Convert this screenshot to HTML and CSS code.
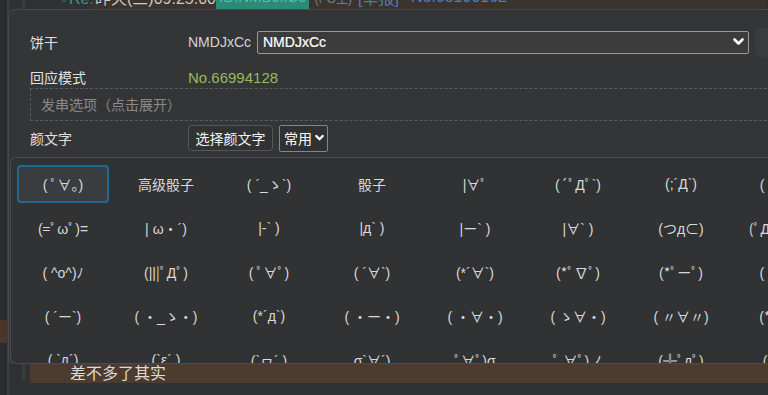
FILE: index.html
```html
<!DOCTYPE html>
<html lang="zh">
<head>
<meta charset="utf-8">
<title>颜文字</title>
<link rel="stylesheet" href="styles.css">
</head>
<body>
<div class="page">
  <div class="side"><div class="side-mark"></div></div>
  <div class="rail"></div>
  <div class="main">
    <div class="thread">
      <div class="head">
        <span class="re">『Re:</span>
        <div class="head-bar">
          <span class="time">昨天(三)09:25:00</span>
          <span class="uid">ID:NMDJxCc</span>
          <span class="po">(PO主)</span>
          <span class="report">[举报]</span>
          <span class="no">No.68190162</span>
        </div>
      </div>
      <div class="reply">差不多了其实</div>
    </div>
  </div>
</div>

<div class="modal">
  <div class="row row-cookie">
    <div class="label">饼干</div>
    <div class="value">
      <span class="cookie">NMDJxCc</span>
      <div class="select select-wide">
        <span class="select-text">NMDJxCc</span>
        <svg class="chev" width="11" height="8" viewBox="0 0 11 8"><path d="M1.5 1.5 L5.5 5.5 L9.5 1.5" fill="none" stroke="#fff" stroke-width="2.6" stroke-linecap="round" stroke-linejoin="round"/></svg>
      </div>
      <div class="side-btn"></div>
    </div>
  </div>
  <div class="row row-mode">
    <div class="label">回应模式</div>
    <div class="value"><span class="reply-no">No.66994128</span></div>
  </div>
  <div class="options">发串选项（点击展开）</div>
  <div class="row row-kao">
    <div class="label">颜文字</div>
    <div class="value">
      <button class="btn">选择颜文字</button>
      <div class="select select-small">
        <span class="select-text">常用</span>
        <svg class="chev" width="9" height="8" viewBox="0 0 9 8"><path d="M1.3 2 L4.5 5.3 L7.7 2" fill="none" stroke="#fff" stroke-width="2.3" stroke-linecap="round" stroke-linejoin="round"/></svg>
      </div>
    </div>
  </div>
  <div class="panel">
    <div class="grid">
      <div class="cell active">( ﾟ∀。)</div>
      <div class="cell cjk">高级骰子</div>
      <div class="cell">( ´_ゝ`)</div>
      <div class="cell cjk">骰子</div>
      <div class="cell">|∀ﾟ</div>
      <div class="cell">(´ﾟДﾟ`)</div>
      <div class="cell">(;´Д`)</div>
      <div class="cell">(｀･ω･)</div>

      <div class="cell">(=ﾟωﾟ)=</div>
      <div class="cell">| ω・´)</div>
      <div class="cell">|-` )</div>
      <div class="cell">|д` )</div>
      <div class="cell">|ー` )</div>
      <div class="cell">|∀` )</div>
      <div class="cell">(つд⊂)</div>
      <div class="cell">(ﾟДﾟ≡ﾟДﾟ)</div>

      <div class="cell">( ^o^)ﾉ</div>
      <div class="cell">(|||ﾟДﾟ)</div>
      <div class="cell">( ﾟ∀ﾟ)</div>
      <div class="cell">( ´∀`)</div>
      <div class="cell">(*´∀`)</div>
      <div class="cell">(*ﾟ∇ﾟ)</div>
      <div class="cell">(*ﾟーﾟ)</div>
      <div class="cell">(　ﾟ 3ﾟ)</div>

      <div class="cell">( ´ー`)</div>
      <div class="cell">( ・_ゝ・)</div>
      <div class="cell">(*´д`)</div>
      <div class="cell">( ・ー・)</div>
      <div class="cell">( ・∀・)</div>
      <div class="cell">( ゝ∀・)</div>
      <div class="cell">( 〃∀〃)</div>
      <div class="cell">(*ﾟ∀ﾟ*)</div>

      <div class="cell">( `д´)</div>
      <div class="cell">(`ε´ )</div>
      <div class="cell">(`ヮ´ )</div>
      <div class="cell">σ`∀´)</div>
      <div class="cell">ﾟ∀ﾟ)σ</div>
      <div class="cell">ﾟ ∀ﾟ)ノ</div>
      <div class="cell">(╬ﾟдﾟ)</div>
      <div class="cell">(|||ﾟдﾟ)</div>
    </div>
  </div>
</div>
</body>
</html>
```

FILE: styles.css
```css
html, body {
  margin: 0;
  padding: 0;
  width: 768px;
  height: 395px;
  overflow: hidden;
  background: #2f3032;
  font-family: "Liberation Sans", "Noto Sans CJK SC", sans-serif;
}

.page {
  display: flex;
  height: 395px;
}

.side {
  width: 7px;
  background: #2a2b2d;
}

.side-mark {
  margin-top: 320px;
  height: 23px;
  background: #4b3729;
}

.rail {
  width: 2px;
  background: #3c3d40;
}

.main {
  flex: 1;
  background: #303133;
}

.thread {
  margin-left: 13px;
  border-left: 3px solid #3b3c3f;
  height: 395px;
}

.head {
  height: 24px;
  margin-top: -15px;
  display: flex;
  align-items: center;
  font-size: 16px;
  white-space: nowrap;
}

.re {
  margin-left: 28px;
  width: 39px;
  color: #3a9a88;
}

.head-bar {
  flex: 1;
  height: 24px;
  margin-right: 3px;
  display: flex;
  align-items: center;
  background: #3d332d;
}

.time {
  color: #c9c9c9;
  padding-left: 3px;
  width: 121px;
}

.uid {
  background: #2a8b78;
  color: #5fbca8;
  padding: 0 3px;
  font-size: 15px;
  line-height: 24px;
}

.po {
  color: #62809a;
  font-size: 12px;
  margin-left: 6px;
}

.report {
  color: #4a7bbb;
  margin-left: 6px;
}

.no {
  color: #4c80bf;
  margin-left: 12px;
}

.reply {
  margin-top: 352px;
  margin-left: 5px;
  height: 22px;
  background: #4d3b2f;
  color: #dcdcdc;
  font-size: 16px;
  line-height: 22px;
  padding-left: 40px;
  font-family: "Noto Sans CJK SC", sans-serif;
}

/* modal */
.modal {
  position: absolute;
  left: 8px;
  top: 9px;
  width: 830px;
  background: #343537;
  border: 1px solid #48494c;
  border-bottom: none;
  border-radius: 7px 0 0 0;
  padding: 20px 0 0 21px;
  box-sizing: border-box;
  color: #e2e2e2;
  font-size: 14px;
}

.row {
  display: flex;
  align-items: center;
}

.label {
  width: 158px;
  flex: none;
  font-family: "Noto Sans CJK SC", sans-serif;
  color: #e0e0e0;
}

.value {
  display: flex;
  align-items: center;
  gap: 6px;
}

.row-cookie {
  height: 24px;
}

.cookie {
  color: #d4d4d4;
}

.select {
  display: flex;
  align-items: center;
  justify-content: space-between;
  box-sizing: border-box;
  border: 1px solid #9a9a9a;
  border-radius: 2px;
  background: #3b3b3b;
  color: #fff;
  white-space: nowrap;
}

.select-wide {
  width: 492px;
  height: 23px;
  padding: 0 4px 0 5px;
}

.select-wide .select-text {
  font-size: 14px;
  -webkit-text-stroke: 0.2px #fff;
}

.side-btn {
  width: 30px;
  height: 29px;
  border-radius: 5px;
  background: #3a3b3d;
}

.row-mode {
  margin-top: 12px;
  height: 22px;
}

.reply-no {
  color: #9aba5c;
  font-size: 15px;
}

.options {
  height: 33px;
  box-sizing: border-box;
  border: 1px dashed #5a5b5e;
  border-right: none;
  padding-left: 10px;
  line-height: 31px;
  color: #8a8a8a;
  font-family: "Noto Sans CJK SC", sans-serif;
}

.row-kao {
  margin-top: 4px;
  height: 26px;
}

.btn {
  height: 26px;
  width: 85px;
  box-sizing: border-box;
  border: 1px solid #55565a;
  border-radius: 4px;
  background: #313234;
  color: #f2f2f2;
  font-family: "Noto Sans CJK SC", sans-serif;
  font-size: 14px;
  padding: 0;
}

.select-small {
  width: 49px;
  height: 27px;
  padding: 0 3px 0 4px;
  background: #303133;
  border-color: #858585;
  font-family: "Noto Sans CJK SC", sans-serif;
  gap: 3px;
}

.select-small .chev {
  flex: none;
}

.panel {
  margin-top: 6px;
  margin-left: -20px;
  height: 207px;
  box-sizing: border-box;
  border: 1px solid #4a4b4e;
  border-right: none;
  border-radius: 6px 0 0 6px;
  background: #313234;
  overflow: hidden;
}

.grid {
  display: grid;
  grid-template-columns: repeat(8, 92px);
  grid-auto-rows: 38px;
  column-gap: 11px;
  row-gap: 6px;
  padding: 7px 0 0 6px;
}

.cell {
  display: flex;
  align-items: center;
  justify-content: center;
  box-sizing: border-box;
  border-radius: 4px;
  color: #d9d9d9;
  font-size: 14px;
  font-family: "Liberation Sans", "Noto Sans CJK JP", sans-serif;
  white-space: pre;
}

.cell.cjk {
  font-family: "Noto Sans CJK SC", sans-serif;
}

.cell.active {
  border: 2px solid #1d6b94;
  background: #3a3d3f;
}
```
